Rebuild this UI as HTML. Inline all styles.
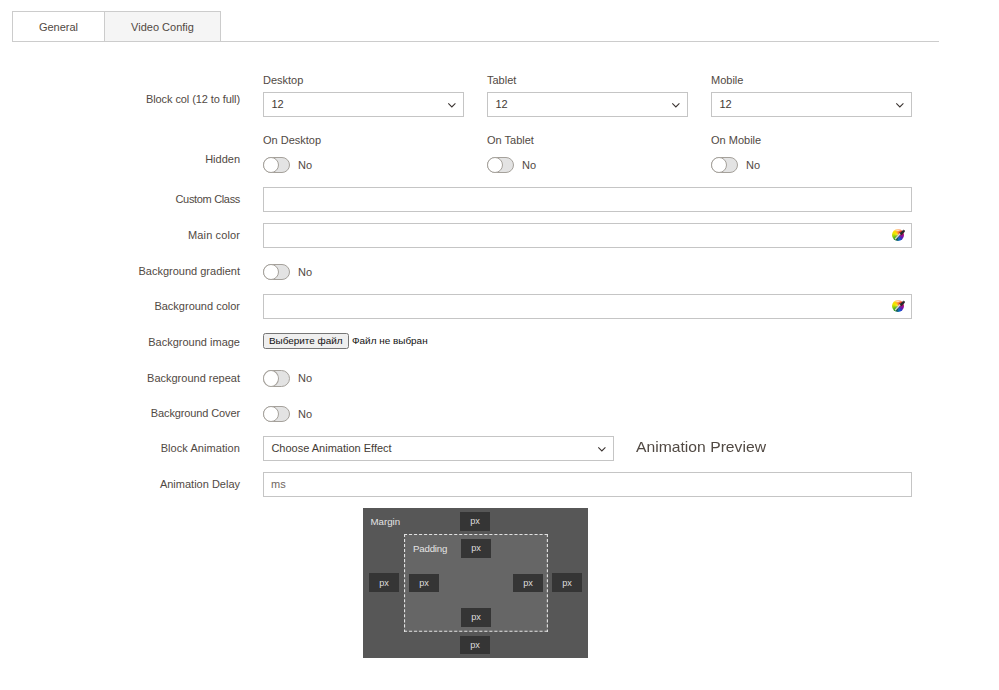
<!DOCTYPE html>
<html lang="en">
<head>
<meta charset="utf-8">
<title>Block settings</title>
<style>
*{box-sizing:border-box;margin:0;padding:0}
html,body{width:999px;height:690px;background:#fff;overflow:hidden}
body{position:relative;font-family:"Liberation Sans",sans-serif;font-size:11px;color:#514943;line-height:14px}
.abs{position:absolute;white-space:nowrap}
.tabs{position:absolute;left:12px;top:11px;width:927px;height:31px;border-bottom:1px solid #ccc}
.tab{position:absolute;top:0;height:31px;border:1px solid #ccc;text-align:center;line-height:31px;font-size:11px;color:#514943}
.tab.t1{left:0;width:93px;background:#fff}
.tab.t2{left:92px;width:117px;background:#f5f5f5}
.lbl{position:absolute;right:759px;white-space:nowrap;text-align:right;height:14px}
.sub{position:absolute;white-space:nowrap;height:14px}
.inp{position:absolute;left:263px;width:649px;height:25px;border:1px solid #c5c5c5;background:#fff}
.sel{position:absolute;width:201px;height:25px;border:1px solid #c5c5c5;background:#fff;padding-left:7.4px;line-height:23px;color:#443b35}
.sel svg{position:absolute;right:6.2px;top:9.35px}
.tg{position:absolute;width:27px;height:16px;border-radius:8px;border:1px solid #a5a19b;background:#e3e3e3}
.tg i{position:absolute;left:-1px;top:-1px;width:16px;height:16px;border-radius:50%;border:1px solid #a5a19b;background:#fff}
.no{position:absolute;white-space:nowrap;height:14px}

.fbtn{position:absolute;left:263px;top:333px;width:85.5px;height:16px;border:1px solid #767676;border-radius:2.5px;background:#efefef;color:#111;font-size:9.95px;line-height:14.4px;text-align:center;white-space:nowrap}
.ftxt{position:absolute;left:352px;top:334px;color:#111;font-size:9.95px;line-height:14.4px;white-space:nowrap}
.box{position:absolute;left:363px;top:508px;width:225px;height:149.5px;background:#575757}
.box .in{position:absolute;left:41px;top:26px;width:144px;height:98px;background:#666}
.box .in svg{position:absolute;left:0;top:0}
.bt{position:absolute;color:#e4e4e4;font-size:9.7px;line-height:12px;white-space:nowrap}
.px{position:absolute;width:30px;height:18.6px;background:#353535;color:#ddd;font-size:9.2px;line-height:19.2px;overflow:hidden;text-align:center;letter-spacing:-.2px}

.cp{position:absolute;left:891.8px;width:12px;height:12px;border-radius:50%;background:radial-gradient(ellipse 36% 14% at 50% 10%,rgba(255,255,255,.85) 0,rgba(255,255,255,0) 100%),radial-gradient(circle at 50% 50%,rgba(255,255,255,.28) 0,rgba(255,255,255,0) 40%),conic-gradient(from 0deg,#ff8420 0deg,#f24a1c 35deg,#d01838 65deg,#a00c90 95deg,#5a1cb0 125deg,#1c48d0 150deg,#0c70c0 170deg,#0c5a5a 192deg,#2c9c2c 215deg,#84c810 248deg,#e4e600 285deg,#ffdc00 318deg,#ffa018 345deg,#ff8420 360deg);filter:blur(.35px)}
.cpd{position:absolute;left:889px;width:18px;height:18px}
</style>
</head>
<body>
<div class="tabs">
  <div class="tab t1">General</div>
  <div class="tab t2">Video Config</div>
</div>

<!-- row 1 -->
<div class="lbl" style="top:92px;letter-spacing:-0.09px">Block col (12 to full)</div>
<div class="sub" style="left:263px;top:73px">Desktop</div>
<div class="sub" style="left:487px;top:73px">Tablet</div>
<div class="sub" style="left:711px;top:73px">Mobile</div>
<div class="sel" style="left:263px;top:92px">12<svg width="10" height="7" viewBox="0 0 10 7"><path d="M1.3 1.4 L4.85 4.95 L8.4 1.4" fill="none" stroke="#3a3330" stroke-width="1.05"/></svg></div>
<div class="sel" style="left:487px;top:92px">12<svg width="10" height="7" viewBox="0 0 10 7"><path d="M1.3 1.4 L4.85 4.95 L8.4 1.4" fill="none" stroke="#3a3330" stroke-width="1.05"/></svg></div>
<div class="sel" style="left:711px;top:92px">12<svg width="10" height="7" viewBox="0 0 10 7"><path d="M1.3 1.4 L4.85 4.95 L8.4 1.4" fill="none" stroke="#3a3330" stroke-width="1.05"/></svg></div>

<!-- row 2 -->
<div class="lbl" style="top:152px">Hidden</div>
<div class="sub" style="left:263px;top:133px">On Desktop</div>
<div class="sub" style="left:487px;top:133px">On Tablet</div>
<div class="sub" style="left:711px;top:133px">On Mobile</div>
<div class="tg" style="left:263px;top:157px"><i></i></div><div class="no" style="left:298px;top:158px">No</div>
<div class="tg" style="left:487px;top:157px"><i></i></div><div class="no" style="left:522px;top:158px">No</div>
<div class="tg" style="left:711px;top:157px"><i></i></div><div class="no" style="left:746px;top:158px">No</div>

<div class="lbl" style="top:192px;letter-spacing:-0.33px">Custom Class</div>
<div class="inp" style="top:187px"></div>

<div class="lbl" style="top:228px;letter-spacing:0.12px">Main color</div>
<div class="inp" style="top:223px"></div>

<div class="lbl" style="top:264px">Background gradient</div>
<div class="tg" style="left:263px;top:264px"><i></i></div><div class="no" style="left:298px;top:265px">No</div>

<div class="lbl" style="top:299px">Background color</div>
<div class="inp" style="top:294px"></div>

<div class="lbl" style="top:335px">Background image</div>

<div class="lbl" style="top:371px">Background repeat</div>
<div class="tg" style="left:263px;top:370px;height:17px;border-radius:8.5px"><i style="height:17px;border-radius:8px/8.5px"></i></div><div class="no" style="left:298px;top:371px">No</div>

<div class="lbl" style="top:406px;letter-spacing:-0.12px">Background Cover</div>
<div class="tg" style="left:263px;top:406px"><i></i></div><div class="no" style="left:298px;top:407px">No</div>

<div class="lbl" style="top:441px;letter-spacing:0.07px">Block Animation</div>
<div class="sel" style="left:263px;top:436px;width:351px">Choose Animation Effect<svg width="10" height="7" viewBox="0 0 10 7"><path d="M1.3 1.4 L4.85 4.95 L8.4 1.4" fill="none" stroke="#3a3330" stroke-width="1.05"/></svg></div>
<div class="abs" style="left:636px;top:438px;font-size:14.3px;line-height:18px;transform:scaleX(1.098);transform-origin:0 50%">Animation Preview</div>

<div class="lbl" style="top:477px">Animation Delay</div>
<div class="inp" style="top:472px;padding-left:7px;line-height:23px;color:#6f6761">ms</div>


<div class="cp" style="top:228.9px"></div>
<svg class="cpd" style="top:226px" viewBox="0 0 18 18"><g style="filter:blur(.3px)"><path d="M7.2 13.3 L12.3 8.0" stroke="#34343c" stroke-width=".9" fill="none" stroke-linecap="round"/><path d="M6.5 12.8 L11.5 7.2" stroke="#efe6ec" stroke-opacity=".85" stroke-width="1.3" fill="none" stroke-linecap="round"/><g transform="translate(13.7 6.0) rotate(-45)"><rect x="-2.7" y="-1.25" width="5.3" height="2.5" rx="1.2" fill="#29292b"/></g><g transform="translate(11.9 7.7) rotate(-45)"><rect x="-.55" y="-1.8" width="1.1" height="3.6" rx=".4" fill="#29292b"/></g><path d="M13.6 4.6 L14.9 4.0" stroke="#8a8a8a" stroke-width=".6" fill="none"/></g></svg>
<div class="cp" style="top:299.9px"></div>
<svg class="cpd" style="top:297px" viewBox="0 0 18 18"><g style="filter:blur(.3px)"><path d="M7.2 13.3 L12.3 8.0" stroke="#34343c" stroke-width=".9" fill="none" stroke-linecap="round"/><path d="M6.5 12.8 L11.5 7.2" stroke="#efe6ec" stroke-opacity=".85" stroke-width="1.3" fill="none" stroke-linecap="round"/><g transform="translate(13.7 6.0) rotate(-45)"><rect x="-2.7" y="-1.25" width="5.3" height="2.5" rx="1.2" fill="#29292b"/></g><g transform="translate(11.9 7.7) rotate(-45)"><rect x="-.55" y="-1.8" width="1.1" height="3.6" rx=".4" fill="#29292b"/></g><path d="M13.6 4.6 L14.9 4.0" stroke="#8a8a8a" stroke-width=".6" fill="none"/></g></svg>
<div class="fbtn">Выберите файл</div>
<div class="ftxt">Файл не выбран</div>

<div class="box">
  <div class="bt" style="left:7.5px;top:7.6px;letter-spacing:0">Margin</div>
  <div class="px" style="left:97px;top:4px">px</div>
  <div class="px" style="left:6px;top:65px;line-height:21px">px</div>
  <div class="px" style="left:189px;top:65px;line-height:21px">px</div>
  <div class="px" style="left:97px;top:128px;height:18px">px</div>
  <div class="in">
    <svg width="144" height="98" viewBox="0 0 144 98"><g stroke="#e2e2e2" stroke-width="1.1" stroke-dasharray="3.05 1.97" fill="none"><path d="M0 .55H144"/><path d="M0 97.3H144"/><path d="M.55 0V98"/><path d="M143.4 0V98"/></g></svg>
    <div class="bt" style="left:9px;top:8.5px;letter-spacing:-.2px">Padding</div>
    <div class="px" style="left:57px;top:5px">px</div>
    <div class="px" style="left:5px;top:40px;height:17.8px">px</div>
    <div class="px" style="left:109px;top:40px;height:17.8px">px</div>
    <div class="px" style="left:57px;top:74px">px</div>
  </div>
</div>
</body>
</html>
